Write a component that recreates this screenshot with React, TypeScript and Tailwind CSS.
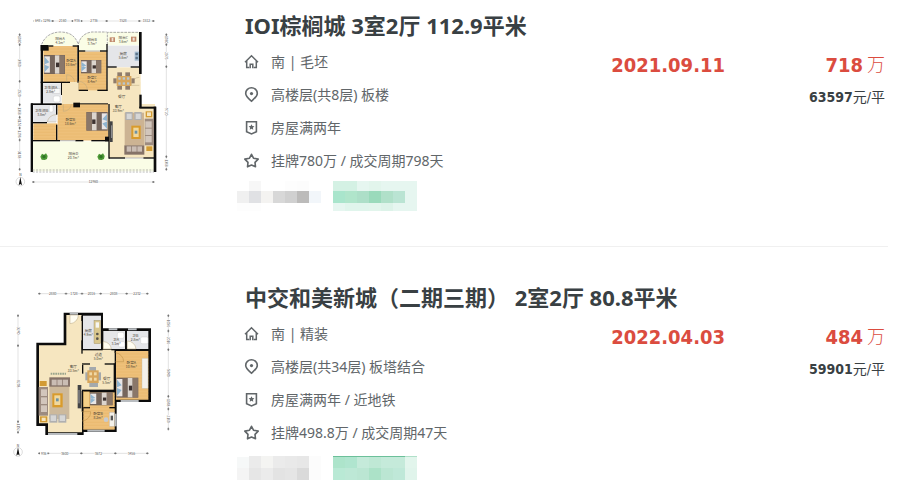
import type { ReactNode } from 'react';

type Listing = {
  id: string;
  title: string;
  orientation: string;
  floor: string;
  tags: string;
  deal: string;
  date: string;
  price: string;
  unitPrice: string;
  plan: ReactNode;
  greyTag: string[][];
  greenTag: string[][];
  rowHeights: string[];
};

type Box = { x: number; y: number; w: number; h: number };

function Rects({ items, fill }: { items: number[][]; fill: string }) {
  return (
    <g fill={fill}>
      {items.map(([x, y, w, h]) => (
        <rect key={`${x}-${y}-${w}`} x={x} y={y} width={w} height={h} />
      ))}
    </g>
  );
}

function RoomLabel({ x, y, name, area }: { x: number; y: number; name: string; area: string }) {
  return (
    <text x={x} y={y} fontSize="11" textAnchor="middle" fill="#4a4438">
      {name}
      <tspan x={x} dy="12" fontSize="10">
        {area}
      </tspan>
    </text>
  );
}

function Wood({ x, y, w, h }: Box) {
  const lines = [];
  for (let i = y + 9; i < y + h; i += 9) {
    lines.push(i);
  }
  return (
    <g>
      <rect x={x} y={y} width={w} height={h} fill="#eec07a" />
      {lines.map((ly) => (
        <path key={ly} d={`M${x} ${ly}h${w}`} stroke="#e6b568" strokeWidth="1.5" />
      ))}
    </g>
  );
}

function Bed({ x, y, w, h, flip }: Box & { flip?: boolean }) {
  return (
    <g transform={flip ? `translate(${2 * x + w} 0) scale(-1 1)` : undefined}>
      <rect x={x} y={y} width={w} height={h} fill="#74635a" />
      <rect x={x + 1} y={y + 4} width={w * 0.28} height={h - 8} fill="#e9e6e6" />
      <path
        d={`M${x + 2} ${y + 6}l14 ${h * 0.28}-14 ${h * 0.1}zM${x + 2} ${y + h - 6}l14 -${h * 0.28}-14 -${h * 0.1}z`}
        fill="#8fb4cf"
      />
      <rect x={x + w * 0.28} y={y + 2} width={w * 0.24} height={h - 4} fill="#76665d" />
      <rect x={x + w * 0.52} y={y + 1} width={w * 0.22} height={h - 2} fill="#dcd5ce" />
      <rect x={x + w * 0.74} y={y + 1} width={w * 0.24} height={h - 2} fill="#8a7769" />
      <rect x={x + w * 0.57} y={y + h * 0.4} width="10" height={h * 0.24} fill="#3d3230" />
    </g>
  );
}

function Dining({ x, y }: { x: number; y: number }) {
  return (
    <g transform={`translate(${x} ${y})`}>
      <Rects
        items={[
          [10, 0, 14, 12],
          [34, 0, 14, 12],
          [10, 40, 14, 12],
          [34, 40, 14, 12],
          [-2, 18, 10, 15],
          [52, 18, 10, 15],
        ]}
        fill="#8f7c6c"
      />
      <rect x="8" y="11" width="44" height="30" fill="#d6a55c" />
      <Rects
        items={[
          [13, 15, 7, 7],
          [26, 15, 7, 7],
          [39, 15, 7, 7],
          [13, 30, 7, 7],
          [26, 30, 7, 7],
          [39, 30, 7, 7],
        ]}
        fill="#b9c6cf"
      />
    </g>
  );
}

function Dimension({ marks, at, vertical }: { marks: number[]; at: number; vertical?: boolean }) {
  const first = marks[0];
  const last = marks[marks.length - 1];
  return (
    <g transform={vertical ? `translate(${at} 0) rotate(90)` : `translate(0 ${at})`}>
      <path d={`M${first} 0H${last}`} stroke="#c4c4c4" strokeWidth="1.5" />
      {marks.map((m) => (
        <path key={m} d={`M${m} -3v6M${m - 4} 0h8`} stroke="#555" strokeWidth="2" />
      ))}
      {marks.slice(1).map((m, i) => {
        const span = m - marks[i];
        const mid = marks[i] + span / 2;
        return (
          <g key={m}>
            <rect x={mid - 11} y="-4" width="22" height="8" fill="#fff" />
            <text x={mid} y="4" fontSize="10" textAnchor="middle" fill="#555">
              {span * 36}
            </text>
          </g>
        );
      })}
    </g>
  );
}

function Compass({ x, y }: { x: number; y: number }) {
  return (
    <g transform={`translate(${x} ${y})`}>
      <text x="0" y="-16" fontSize="10" textAnchor="middle" fill="#333">
        N
      </text>
      <circle r="13" fill="none" stroke="#bbb" strokeWidth="1.5" />
      <path d="M0 -14L5 11 0 7-5 11z" fill="#111" />
    </g>
  );
}

function Plant({ x, y }: { x: number; y: number }) {
  return (
    <g transform={`translate(${x} ${y})`}>
      <path d="M-11 0L-6-9 0-6 6-10 11-2 9 7 2 10-7 9z" fill="#4d9a37" />
      <circle r="5" fill="#2f7424" />
    </g>
  );
}

function PlanThreeRooms() {
  return (
    <svg viewBox="0 0 510 540" className="h-[180px] w-[170px] shrink-0 font-['Noto_Sans_CJK_SC',sans-serif]" role="img">
      <Dimension marks={[74, 92, 128, 188, 214, 290, 388, 430]} at={33} />
      <Dimension marks={[74, 104, 214, 284, 322, 354, 390, 478]} at={29} vertical />
      <Dimension marks={[74, 104, 170, 440, 478]} at={469} vertical />
      <Dimension marks={[70, 430]} at={516} />

      {/* balconies */}
      <path d="M97 107C102 82 122 68 150 67C180 66 198 80 204 107z" fill="#fafde6" />
      <path d="M206 123V96C212 78 226 70 246 67H290V123z" fill="#fafde6" />
      <rect x="292" y="66" width="97" height="40" fill="#fafde6" />
      <path
        d="M95 103C104 80 122 67 150 66C180 66 196 78 205 103C210 80 226 68 246 66H290"
        fill="none"
        stroke="#999"
        strokeWidth="2.5"
        strokeDasharray="8 3"
      />
      <path d="M292 104V67H388" fill="none" stroke="#999" strokeWidth="2.5" strokeDasharray="8 3" />
      <Rects items={[[299, 82, 16, 14], [363, 80, 16, 15]]} fill="#c08a6c" />
      <Rects items={[[305, 84, 5, 10], [368, 83, 6, 9]]} fill="#f3e3d3" />

      {/* floors */}
      <Rects items={[[155, 215, 236, 68], [292, 172, 100, 112], [297, 282, 138, 162]]} fill="#f6e6c0" />
      <Wood x={100} y={108} w={102} h={108} />
      <Wood x={206} y={124} w={84} h={117} />
      <Wood x={143} y={282} w={152} h={109} />
      <Wood x={70} y={340} w={72} h={51} />
      <Rects items={[[292, 107, 97, 64], [98, 220, 56, 58], [70, 284, 70, 52]]} fill="#e5e6e9" />
      <rect x="68" y="394" width="229" height="90" fill="#fafde6" />
      <rect x="297" y="446" width="137" height="38" fill="#fafde6" />

      {/* walls */}
      <Rects
        items={[
          [92, 105, 24, 17],
          [92, 105, 7, 178],
          [116, 106, 14, 4],
          [188, 106, 18, 4],
          [202, 106, 5, 112],
          [92, 215, 88, 4],
          [206, 121, 20, 4],
          [270, 121, 22, 4],
          [206, 239, 28, 4],
          [262, 239, 30, 4],
          [289, 102, 4, 141],
          [292, 169, 28, 4],
          [362, 169, 28, 4],
          [387, 66, 8, 126],
          [388, 254, 7, 40],
          [388, 290, 50, 6],
          [431, 290, 8, 196],
          [153, 219, 3, 36],
          [63, 280, 92, 5],
          [62, 280, 7, 206],
          [69, 336, 42, 4],
          [138, 284, 4, 30],
          [138, 344, 4, 48],
          [190, 278, 20, 14],
          [206, 280, 88, 3],
          [68, 390, 82, 4],
          [196, 390, 24, 4],
          [244, 390, 52, 4],
          [285, 380, 12, 14],
          [295, 282, 4, 164],
          [297, 442, 48, 4],
          [400, 442, 34, 4],
        ]}
        fill="#0c0c0c"
      />
      <path d="M150 392h46M345 444h55M226 123h44" stroke="#b8b8b8" strokeWidth="3" />
      <path d="M68 480H432" stroke="#999" strokeWidth="2" strokeDasharray="6 4" />
      <path d="M68 486H432" stroke="#999" strokeWidth="2" strokeDasharray="6 4" />
      <g fill="none" stroke="#b9a680" strokeWidth="1.5">
        <path d="M170 216V194A24 24 0 0 1 194 216" />
        <path d="M206 240V214A26 26 0 0 1 232 240" />
        <path d="M160 283V304A24 24 0 0 0 184 283" />
        <path d="M138 314A26 26 0 0 0 112 336H138" />
        <path d="M388 226H364A24 24 0 0 1 388 202" />
      </g>

      {/* furniture */}
      <Bed x={102} y={135} w={63} h={57} />
      <Bed x={213} y={150} w={61} h={40} />
      <Bed x={229} y={306} w={64} h={56} flip />
      <Dining x={312} y={187} />
      <rect x="374" y="125" width="13" height="27" fill="#9fb8cc" />
      <circle cx="380" cy="132" r="4" fill="#5d7387" />
      <circle cx="380" cy="144" r="4" fill="#5d7387" />
      <rect x="130" y="258" width="20" height="18" rx="5" fill="#fff" stroke="#bbb" />
      <rect x="118" y="286" width="11" height="20" rx="4" fill="#fff" stroke="#bbb" />
      <rect x="128" y="236" width="22" height="14" fill="#f8f8f8" stroke="#bbb" />
      <rect x="344" y="308" width="58" height="98" fill="#ccb393" />
      <Rects items={[[346, 306, 22, 24], [373, 306, 22, 24]]} fill="#b0b0b0" />
      <Rects items={[[350, 311, 15, 16], [377, 311, 15, 16]]} fill="#d6d6d6" />
      <rect x="404" y="326" width="28" height="80" fill="#9c8b80" />
      <Rects items={[[406, 334, 19, 19], [406, 356, 19, 19], [406, 378, 19, 19]]} fill="#d2c6bc" />
      <rect x="343" y="406" width="60" height="28" fill="#857268" />
      <Rects items={[[350, 409, 14, 16], [366, 409, 14, 16], [382, 409, 14, 16]]} fill="#cabdb4" />
      <Rects items={[[407, 304, 20, 18], [409, 409, 18, 14]]} fill="#d29b34" />
      <rect x="411" y="307" width="12" height="11" fill="#f4e4c0" />
      <rect x="364" y="347" width="28" height="40" fill="#d99b2c" />
      <rect x="370" y="353" width="16" height="28" fill="#f0d79c" />
      <rect x="374" y="362" width="8" height="9" fill="#6d93a5" />
      <rect x="299" y="334" width="9" height="62" fill="#424244" />
      <rect x="303" y="346" width="4" height="38" fill="#8d8d90" />
      <Plant x={102} y={440} />
      <Plant x={273} y={440} />

      <RoomLabel x={150} y={90} name="阳台A" area="4.1m²" />
      <RoomLabel x={246} y={94} name="阳台B" area="3.7m²" />
      <RoomLabel x={340} y={86} name="阳台C" area="3.6m²" />
      <RoomLabel x={183} y={155} name="卧室A" area="10.6m²" />
      <RoomLabel x={246} y={208} name="卧室C" area="8.4m²" />
      <RoomLabel x={340} y={136} name="厨房" area="5.6m²" />
      <RoomLabel x={122} y={236} name="卫生间A" area="2.8m²" />
      <RoomLabel x={95} y={307} name="卫生间B" area="3.8m²" />
      <RoomLabel x={181} y={333} name="卧室B" area="18.6m²" />
      <RoomLabel x={325} y={294} name="客厅" area="33.9m²" />
      <RoomLabel x={190} y={436} name="阳台D" area="20.7m²" />
      <text x="335" y="263" fontSize="11" textAnchor="middle" fill="#4a4438">
        餐厅
      </text>
      <Compass x={31} y={515} />
    </svg>
  );
}

function PlanTwoRooms() {
  return (
    <svg viewBox="0 -9 510 540" className="h-[180px] w-[170px] shrink-0 font-['Noto_Sans_CJK_SC',sans-serif]" role="img">
      <Dimension marks={[88, 168, 216, 272, 350, 412]} at={26} />
      <Dimension marks={[92, 182, 410, 442]} at={24} vertical />
      <Dimension marks={[92, 138, 194, 334, 372, 432]} at={475} vertical />
      <Dimension marks={[88, 114, 214, 316, 412]} at={505} />

      {/* outer walls and floors */}
      <path d="M161 83H279V130H423V351H320V441H221V450H106V423H79V173H161z" fill="#0c0c0c" />
      <path d="M169 90H215V194H314V318H216V442H114V415H87V181H169z" fill="#f6e6c0" />
      <Rects items={[[219, 92, 54, 100], [280, 138, 65, 54], [351, 138, 64, 54]]} fill="#e5e6e9" />
      <Wood x={318} y={198} w={97} h={146} />
      <Wood x={220} y={322} w={94} h={112} />
      <Rects
        items={[
          [214, 92, 4, 16],
          [214, 166, 4, 40],
          [216, 192, 62, 4],
          [304, 192, 14, 4],
          [314, 196, 4, 8],
          [216, 235, 24, 4],
          [284, 235, 30, 4],
          [311, 235, 5, 84],
          [216, 240, 4, 26],
          [216, 314, 100, 5],
          [215, 318, 5, 62],
          [220, 366, 20, 4],
          [298, 366, 18, 4],
        ]}
        fill="#0c0c0c"
      />
      <g stroke="#b8bcc0" strokeWidth="6">
        <path d="M179 86H204M296 133H322M354 133H380M114 447H202M232 437H284M332 348H386" />
        <path d="M317 386V424" />
      </g>
      <g fill="#fffdf2" stroke="#b9a680" strokeWidth="1.5">
        <path d="M180 90V116A26 26 0 0 0 205 90z" />
        <path d="M280 192V170A24 24 0 0 1 304 192z" />
        <path d="M352 192V168A26 26 0 0 1 378 192z" />
      </g>
      <g fill="none" stroke="#b98d45" strokeWidth="1.5">
        <path d="M316 230H341A28 28 0 0 0 316 203" />
        <path d="M216 380H242A27 27 0 0 1 216 408" />
      </g>

      {/* furniture */}
      <rect x="252" y="106" width="20" height="70" fill="#d9c78d" stroke="#8a7d58" />
      <rect x="257" y="112" width="10" height="16" fill="#f6f6f2" />
      <circle cx="262" cy="147" r="4" fill="#57534b" />
      <circle cx="262" cy="161" r="4" fill="#57534b" />
      <rect x="322" y="142" width="20" height="18" rx="5" fill="#fff" stroke="#bbb" />
      <rect x="326" y="170" width="18" height="16" rx="4" fill="#fff" stroke="#bbb" />
      <rect x="392" y="156" width="22" height="20" rx="4" fill="#fff" stroke="#bbb" />
      <rect x="396" y="220" width="18" height="90" fill="#f4f1ea" stroke="#bba" />
      <Bed x={319} y={278} w={66} h={60} />
      <Bed x={240} y={322} w={68} h={39} />
      <rect x="220" y="320" width="18" height="46" fill="#f5d088" stroke="#b98d45" />
      <rect x="298" y="382" width="15" height="42" fill="#f4f1ea" stroke="#aaa" />
      <rect x="302" y="392" width="7" height="14" fill="#555" />
      <circle cx="288" cy="404" r="7" fill="#c7cbd0" />
      <Rects items={[[238, 246, 20, 12], [238, 294, 26, 12], [226, 262, 10, 24], [262, 262, 11, 24]]} fill="#a4a9ad" />
      <rect x="232" y="256" width="34" height="38" fill="#d6a55c" />
      <Rects items={[[238, 262, 8, 9], [252, 262, 8, 9], [238, 278, 8, 9], [252, 278, 8, 9]]} fill="#f0d9a6" />
      <rect x="118" y="296" width="60" height="106" fill="#cdb99b" />
      <rect x="118" y="277" width="62" height="28" fill="#857268" />
      <Rects items={[[125, 284, 15, 17], [142, 284, 15, 17], [159, 284, 15, 17]]} fill="#cabdb4" />
      <rect x="86" y="306" width="28" height="86" fill="#9c8b80" />
      <Rects items={[[93, 313, 18, 20], [93, 337, 18, 20], [93, 361, 18, 20]]} fill="#d2c6bc" />
      <Rects items={[[89, 288, 21, 15], [90, 394, 22, 18]]} fill="#d29b34" />
      <rect x="95" y="398" width="12" height="10" fill="#f4e4c0" />
      <rect x="127" y="325" width="31" height="42" fill="#d99b2c" />
      <rect x="133" y="331" width="18" height="29" fill="#f0d79c" />
      <rect x="138" y="340" width="8" height="9" fill="#6d93a5" />
      <Rects items={[[118, 388, 24, 25], [145, 388, 24, 25]]} fill="#b0b0b0" />
      <Rects items={[[122, 391, 16, 17], [149, 391, 16, 17]]} fill="#d6d6d6" />
      <rect x="203" y="300" width="11" height="70" fill="#424244" />
      <rect x="205" y="315" width="4" height="40" fill="#8d8d90" />
      <path d="M122 266H168" stroke="#9aa58c" strokeWidth="6" strokeDasharray="5 2" />

      <RoomLabel x={235} y={140} name="厨房" area="4.9m²" />
      <RoomLabel x={318} y={167} name="卫A" area="3.1m²" />
      <RoomLabel x={376} y={155} name="卫B" area="2.8m²" />
      <RoomLabel x={265} y={214} name="过道" area="5.0m²" />
      <RoomLabel x={190} y={248} name="客厅" area="33.5m²" />
      <RoomLabel x={364} y={236} name="卧室A" area="10.9m²" />
      <RoomLabel x={290} y={285} name="餐厅" area="5.5m²" />
      <RoomLabel x={264} y={391} name="卧室B" area="8.2m²" />
      <Compass x={24} y={501} />
    </svg>
  );
}

function HomeIcon() {
  return (
    <svg viewBox="0 0 16 16" className="size-4 shrink-0" fill="none" stroke="currentColor" strokeWidth="1.5">
      <path d="M1 8.200L7.500 1.800 14 8.200M2.700 7v6.500h2.600M12.300 7v6.500H9.700" />
      <path d="M6.200 14.200v-4h2.600v4" />
    </svg>
  );
}

function PinIcon() {
  return (
    <svg viewBox="0 0 16 16" className="size-4 shrink-0" fill="none" stroke="currentColor" strokeWidth="1.6">
      <path d="M7.500 14.200C4.400 11.400 1.700 9.200 1.700 6.400a5.800 5.600 0 0 1 11.600 0C13.300 9.200 10.600 11.400 7.500 14.200z" />
      <circle cx="7.5" cy="6.6" r="1.6" fill="currentColor" stroke="none" />
    </svg>
  );
}

function BadgeIcon() {
  return (
    <svg viewBox="0 0 16 16" className="size-4 shrink-0" fill="none" stroke="currentColor" strokeWidth="1.6">
      <path d="M2.600 1.800h9.800v9.900L7.500 13.900 2.600 11.700z" />
      <path
        d="M7.500 4.200l.9 1.800 2 .3-1.500 1.400.4 2-1.800-1-1.800 1 .4-2L4.600 6.300l2-.3z"
        fill="currentColor"
        stroke="none"
      />
    </svg>
  );
}

function StarIcon() {
  return (
    <svg
      viewBox="0 0 16 16"
      className="size-4 shrink-0"
      fill="none"
      stroke="currentColor"
      strokeWidth="1.6"
      strokeLinejoin="round"
    >
      <path d="M7.500 1.300l2 3.900 4.700.9-3.200 3.300.5 4.400-4-1.700-4 1.700.5-4.400L.8 6.100l4.700-.9z" />
    </svg>
  );
}

function InfoRow({ icon, children }: { icon: ReactNode; children: ReactNode }) {
  return (
    <div className="flex h-[33px] items-center gap-[11px]">
      {icon}
      <span>{children}</span>
    </div>
  );
}

function Mosaic({ rows, heights }: { rows: string[][]; heights: string[] }) {
  return (
    <div>
      {rows.map((row, i) => (
        <div key={i} className={`flex ${heights[i]}`}>
          {row.map((color, j) => (
            <span key={j} className={`w-3 ${color}`} />
          ))}
        </div>
      ))}
    </div>
  );
}

const listings: Listing[] = [
  {
    id: 'ioi',
    title: 'IOI棕榈城 3室2厅 112.9平米',
    orientation: '南 | 毛坯',
    floor: '高楼层(共8层) 板楼',
    tags: '房屋满两年',
    deal: '挂牌780万 / 成交周期798天',
    date: '2021.09.11',
    price: '718',
    unitPrice: '63597',
    plan: <PlanThreeRooms />,
    rowHeights: ['h-[10px]', 'h-3', 'h-2'],
    greyTag: [
      ['bg-white', 'bg-[#f7f7f7]', 'bg-white', 'bg-white', 'bg-[#fdfdfd]', 'bg-[#fcfcfc]', 'bg-white'],
      ['bg-[#f0f0f0]', 'bg-[#e0e1e4]', 'bg-[#f4f3f1]', 'bg-[#d8d8d8]', 'bg-[#d0d0d0]', 'bg-[#bcbbba]', 'bg-[#f2f6fa]'],
      ['bg-[#fdfdfd]', 'bg-[#fdfdfd]', 'bg-white', 'bg-white', 'bg-white', 'bg-white', 'bg-white'],
    ],
    greenTag: [
      ['bg-[#d4f1e4]', 'bg-[#d4f1e4]', 'bg-[#e6f6f0]', 'bg-[#e2f5ec]', 'bg-[#e6f6f0]', 'bg-[#e6f6f0]', 'bg-[#e6f6f0]'],
      ['bg-[#a9e5cc]', 'bg-[#b0e5cb]', 'bg-[#addfc8]', 'bg-[#9adabb]', 'bg-[#b0e0c9]', 'bg-[#bae4d3]', 'bg-[#e6f6f0]'],
      ['bg-[#e6f6f0]', 'bg-[#e0f5ec]', 'bg-[#e0f5ec]', 'bg-[#e2f5ec]', 'bg-[#ddf3e9]', 'bg-[#e6f6f0]', 'bg-[#e6f6f0]'],
    ],
  },
  {
    id: 'zhongjiao',
    title: '中交和美新城（二期三期） 2室2厅 80.8平米',
    orientation: '南 | 精装',
    floor: '高楼层(共34层) 板塔结合',
    tags: '房屋满两年 / 近地铁',
    deal: '挂牌498.8万 / 成交周期47天',
    date: '2022.04.03',
    price: '484',
    unitPrice: '59901',
    plan: <PlanTwoRooms />,
    rowHeights: ['h-px', 'h-[11px]', 'h-3'],
    greyTag: [
      ['bg-white', 'bg-[#ebebeb]', 'bg-[#f4f4f2]', 'bg-[#ebebeb]', 'bg-[#e9e9e9]', 'bg-[#e7e7e7]', 'bg-[#fcfcfc]'],
      ['bg-[#f6f8f8]', 'bg-[#ebebeb]', 'bg-[#f4f4f2]', 'bg-[#ebebeb]', 'bg-[#e9e9e9]', 'bg-[#e7e7e7]', 'bg-[#fcfcfc]'],
      ['bg-[#f4f4f4]', 'bg-[#e6e6e6]', 'bg-[#ebebeb]', 'bg-[#e3e3e3]', 'bg-[#e5e5e5]', 'bg-[#dadada]', 'bg-[#fcfcfc]'],
    ],
    greenTag: [
      ['bg-[#6cc09a]', 'bg-[#6cc09a]', 'bg-[#6cc09a]', 'bg-[#6cc09a]', 'bg-[#6cc09a]', 'bg-[#6cc09a]', 'bg-[#b0e0c9]'],
      ['bg-[#ade4cb]', 'bg-[#b0e5cf]', 'bg-[#c5eada]', 'bg-[#bfe8d5]', 'bg-[#c5eada]', 'bg-[#c5eada]', 'bg-[#e2f5ec]'],
      ['bg-[#b9e9d5]', 'bg-[#bde8d6]', 'bg-[#bbe6d3]', 'bg-[#ace2c8]', 'bg-[#bbe6d3]', 'bg-[#bfe8d8]', 'bg-[#e0f4eb]'],
    ],
  },
];

function ListingItem({ listing }: { listing: Listing }) {
  return (
    <li className="flex gap-[65px] border-b border-[#f0f0f0] pt-[35px] pr-[3px] pb-[35px] pl-[10px] first:pt-[10px] last:border-b-0 last:pb-0">
      {listing.plan}
      <div className="min-w-0 flex-1">
        <h2 className="mb-[5px] text-[22px] leading-[30px] font-bold whitespace-nowrap text-[#394043]">
          {listing.title}
        </h2>
        <div className="flex">
          <div className="-ml-px flex-1 text-sm whitespace-nowrap text-[#616669]">
            <InfoRow icon={<HomeIcon />}>{listing.orientation}</InfoRow>
            <InfoRow icon={<PinIcon />}>{listing.floor}</InfoRow>
            <InfoRow icon={<BadgeIcon />}>{listing.tags}</InfoRow>
            <InfoRow icon={<StarIcon />}>{listing.deal}</InfoRow>
          </div>
          <div className="pt-1 font-['DejaVu_Sans_Condensed','Noto_Sans_CJK_SC',sans-serif] text-xl leading-8 font-bold text-[#db4c3f]">
            {listing.date}
          </div>
          <div className="w-40 pt-1 text-right font-['DejaVu_Sans_Condensed','Noto_Sans_CJK_SC',sans-serif] leading-8">
            <div className="flex items-center justify-end gap-1 text-[#db4c3f]">
              <span className="text-xl leading-8 font-bold">{listing.price}</span>
              <span className="text-lg leading-8 font-light">万</span>
            </div>
            <div className="text-sm leading-8 text-[#394043]">
              <span className="font-bold">{listing.unitPrice}</span>元/平
            </div>
          </div>
        </div>
        <div className="mt-1 -ml-2 flex h-[30px] items-center gap-3">
          <Mosaic rows={listing.greyTag} heights={listing.rowHeights} />
          <Mosaic rows={listing.greenTag} heights={listing.rowHeights} />
        </div>
      </div>
    </li>
  );
}

export default function App() {
  return (
    <main className="bg-white pr-[33px] font-['Noto_Sans','Noto_Sans_CJK_SC',sans-serif]">
      <ul>
        {listings.map((listing) => (
          <ListingItem key={listing.id} listing={listing} />
        ))}
      </ul>
    </main>
  );
}
